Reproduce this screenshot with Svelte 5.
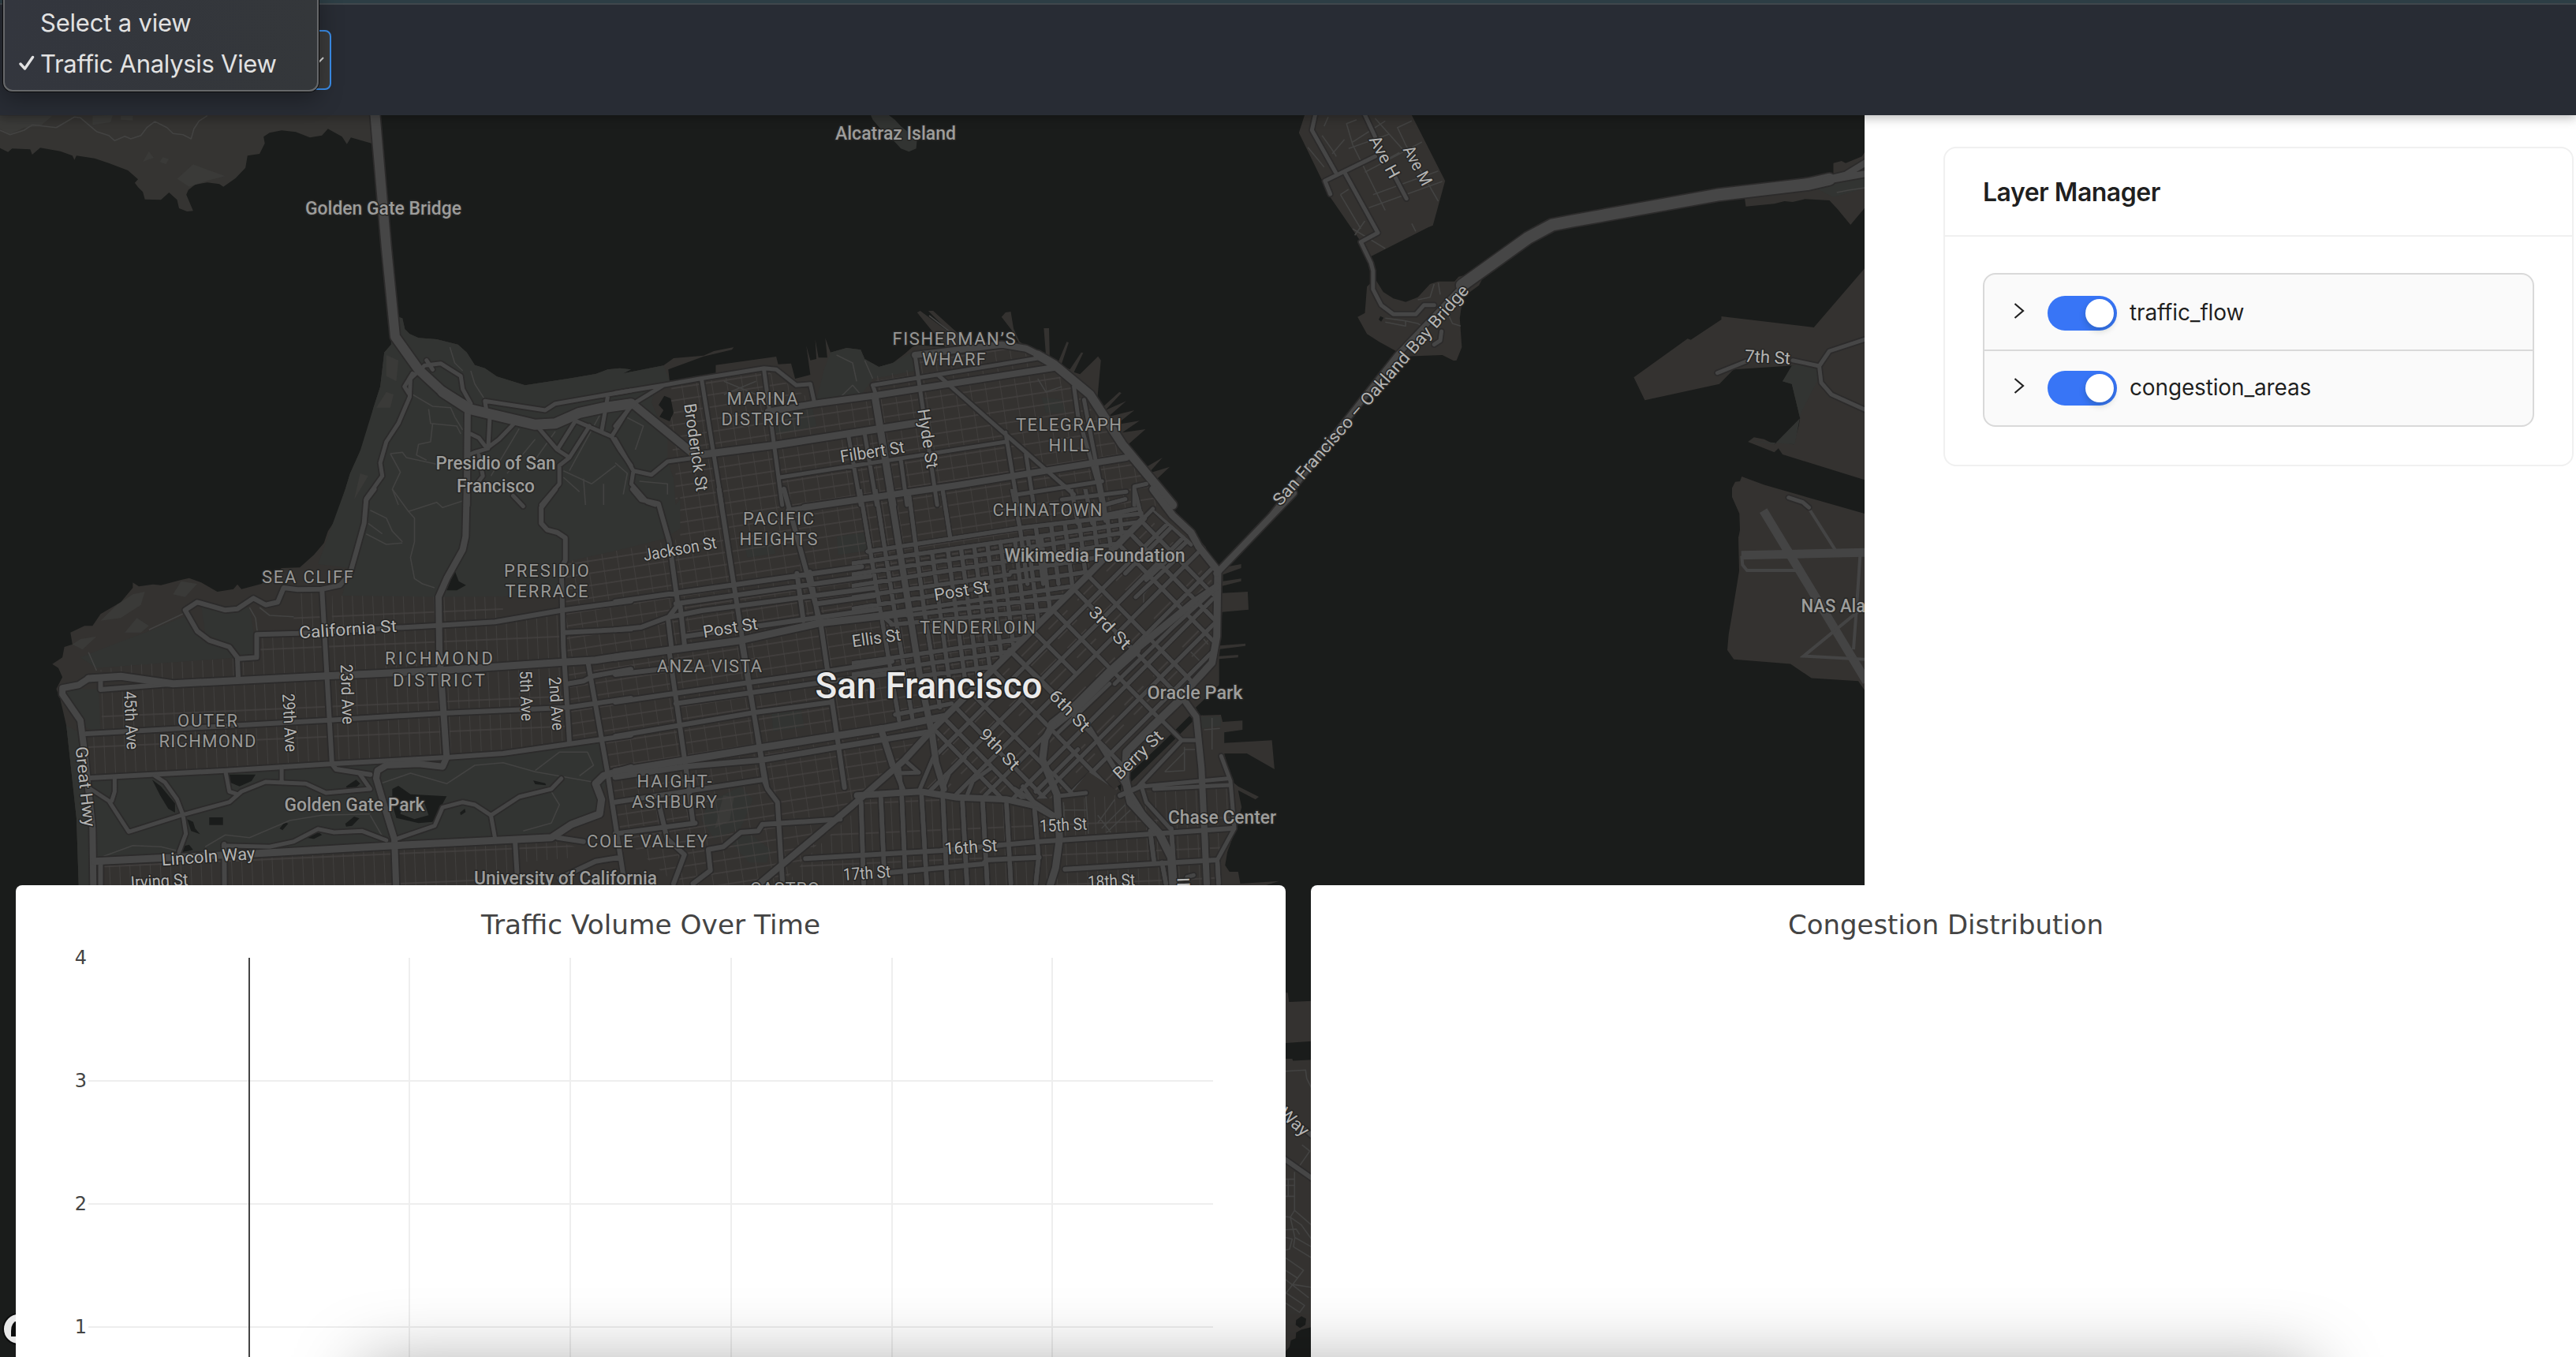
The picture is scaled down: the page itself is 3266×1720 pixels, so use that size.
<script>
  // Survey sheets: each one has an origin and a scale into map pixels.
  const sheets = {
    A: [0, 140, 0.5102, 1 / 3],
    B: [780, 140, 0.5102, 1 / 3],
    C: [1560, 140, 0.51658, 1 / 3],
    D: [0, 620, 0.5102, 1 / 3],
    E: [780, 620, 0.54847, 1 / 3],
    F: [1600, 1100, 1 / 3, 0.3954],
    G: [2100, 540, 1 / 3, 0.38265],
    H: [1080, 620, 1 / 3, 1 / 3]
  };

  function project(sheet, text) {
    const [ox, oy, sx, sy] = sheets[sheet];
    return text.trim().split(/\s+/).map((p) => {
      const [x, y] = p.split(',').map(Number);
      return `${(ox + x * sx).toFixed(1)} ${(oy + y * sy).toFixed(1)}`;
    });
  }
  const line = (sheet, text) => text.split(';').map((part) => 'M' + project(sheet, part).join('L')).join('');
  const area = (...parts) => 'M' + parts.flatMap(([s, t]) => project(s, t)).join('L') + 'Z';

  const presidioCoast = '989,785 1000,790 1006,832 1018,850 1040,865 1085,870 1138,890 1160,920 1180,968 1205,980 1235,1012 1305,1045 1420,1018 1480,1002 1510,985 1540,980 1568,985';

  const headlands = area(['A', '0,0 945,18 952,130 930,128 872,103 862,128 850,100 815,70 800,95 770,103 735,82 700,76 670,85 655,100 658,125 645,165 615,172 610,218 585,258 555,290 545,280 515,274 485,282 468,302 463,320 480,382 465,384 445,372 440,340 420,312 400,340 360,338 355,310 343,292 335,275 343,262 318,228 270,200 235,182 190,172 185,188 180,172 150,155 100,142 80,168 75,148 30,145 20,158 0,143']);

  const land = [
    area(
      ['A', presidioCoast],
      ['B', '20,1000 120,970 145,942 220,932 245,915 295,900 303,883 290,910 220,935 132,985 135,1028 250,1000 250,968 400,936 405,965 437,962 447,1020 485,1005 475,895 485,950 500,945 497,870 505,940 527,940 522,865 535,920 575,903 610,910 620,945 655,975 690,960 720,925 738,900 750,892 820,900 750,768 758,762 835,850 778,762 790,762 850,845 900,890 930,895 1005,890 985,835 960,785 970,768 983,765 990,830 1005,880 1040,912 1070,925 1065,828 1078,828 1080,945 1100,960 1122,880 1127,882 1108,970 1130,985 1158,920 1163,922 1140,995 1155,1003 1200,935 1207,950 1197,1115 1210,1130 1253,1070 1258,1075 1218,1140 1270,1105 1225,1165 1290,1140 1245,1195 1303,1180 1260,1225 1318,1212 1275,1270 1315,1360 1360,1320 1325,1380 1378,1355 1340,1410 1385,1500'],
      ['E', '1245,0 1330,155 1365,220 1372,250 1398,300 1447,285 1447,300 1405,325 1405,350 1447,340 1447,350 1403,368 1403,395 1462,390 1464,458 1403,467 1398,595 1457,587 1457,596 1398,608 1396,635 1440,630 1440,640 1396,646 1396,745 1342,830 1352,860 1400,858 1404,885 1450,880 1450,915 1408,925 1408,965 1518,955 1524,1065 1460,1005 1408,1005 1425,1110 1440,1130 1488,1170 1480,1180 1440,1145 1448,1210 1435,1290 1415,1380 1410,1430 1420,1455 1440,1455 1445,1500 1535,1490 1440,1540'],
      ['D', '196,1530 190,1250 165,900 150,800 140,760 155,715 145,680 130,665 155,640 160,600 180,590 175,545 210,520 230,520 250,475 300,430 330,375 330,355 345,370 380,362 400,365 450,345 470,338 500,355 540,390 580,380 590,362 600,380 650,360 700,300 745,298 780,250 805,205 815,160 832,120 858,0'],
      ['A', '850,1480 870,1380 895,1295 910,1240 928,1130 945,1050 955,920 972,890 972,860']
    ),
    area(['C', '182,0 182,18 168,85 245,330 345,555 485,445 497,437 527,268 445,18 440,0']),
    area(['C', '355,640 375,690 400,715 430,728 460,710 490,660 510,650 550,650 560,632 580,625 620,635 610,665 570,710 563,790 568,900 555,950 548,952 520,930 430,935 365,880 335,850 312,785 330,770 335,670']),
    area(['C', '1262,332 1265,365 1335,355 1360,345 1380,348 1410,337 1470,342 1490,375 1522,435 1568,350 1568,130 1550,175 1510,200 1500,192 1480,200 1480,240 1420,280']),
    area(['C', '1568,580 1432,825 1205,783 1205,795 1130,872 1122,868 990,1015 1017,1102 1200,1040 1235,985 1385,970 1355,1030 1378,1040 1398,1170 1395,1200 1382,1270 1345,1258 1335,1270 1310,1250 1285,1243 1270,1260 1335,1300 1345,1285 1355,1308 1380,1320 1568,1410']),
    area(['G', '325,167 410,195 800,292 800,885 768,845 590,835 510,788 295,773 270,742 275,690 285,640 315,480 312,370 318,345 316,290 288,235 288,205 300,185 318,183']),
    area(['F', '80,400 98,400 103,430 190,427 190,556 80,562']),
    area(['F', '80,612 115,612 118,618 190,615 190,1472 150,1480 130,1490 128,1508 110,1515 105,1535 80,1560'])
  ];

  const parks = [
    area(
      ['A', presidioCoast],
      ['B', '20,1000 120,970 135,1028 100,1060 90,1110 110,1180 130,1230 130,1330 145,1400 150,1500'],
      ['E', '150,40 150,150 110,190 0,235'],
      ['D', '1410,275 1395,395 1250,408 1080,410 850,405 870,300 790,285 858,0'],
      ['A', '850,1480 870,1380 895,1295 928,1130 945,1050 955,920 972,890 972,860']
    ),
    area(['D', '165,900 205,930 220,1100 820,1045 1100,1020 1250,1005 1410,970 1490,955 1510,1080 1490,1220 1380,1310 980,1350 235,1410 235,1530 196,1530 190,1250']),
    area(['D', '370,540 465,480 500,560 580,610 590,640 240,680 200,640 300,580']),
    area(['D', '500,440 620,450 632,560 632,630 600,630 570,590 510,550']),
    area(['D', '155,760 245,760 250,930 205,900']),
    area(['B', '635,18 680,18 695,35 710,60 750,110 748,145 730,157 710,145 680,95 665,80 640,35']),
    area(['B', '535,920 575,903 610,910 620,945 655,975 690,960 735,920 745,990 640,1020 610,1085 500,1100 520,980']),
    area(['B', '390,1150 490,1130 500,1200 395,1235']),
    area(['B', '1060,1090 1110,1100 1120,1150 1070,1150']),
    area(['E', '512,180 575,165 582,235 515,250']),
    area(['E', '300,215 365,200 370,245 305,260']),
    area(['E', '362,855 430,840 437,905 365,920']),
    area(['E', '215,1190 290,1130 318,1180 290,1290 230,1330 200,1260']),
    area(['E', '260,1330 310,1310 360,1370 350,1420 310,1420']),
    area(['E', '1350,865 1400,865 1400,900 1355,910']),
    area(['C', '1378,970 1445,960 1440,1030 1400,1150 1385,1270 1270,1255 1335,1270 1398,1170 1378,1040 1355,1030']),
    area(['C', '1430,290 1568,255 1568,290 1480,330'])
  ];

  const hills = [
    area(['A', '0,20 130,20 100,60 60,65 25,90 0,70']),
    area(['A', '230,20 280,18 275,45 230,55']),
    area(['A', '480,205 560,250 520,265 470,290 440,260']),
    area(['A', '370,155 382,180 355,195']),
    area(['A', '405,178 420,185 412,205 397,195']),
    area(['A', '300,20 330,20 330,38 300,35']),
    area(['D', '330,400 360,390 350,440 300,490 250,500 290,440']),
    area(['D', '450,350 490,360 460,410 430,400']),
    area(['D', '340,490 370,520 350,545 310,545']),
    area(['D', '180,590 200,570 240,560 205,610']),
    area(['A', '960,930 990,950 985,1030 960,1010']),
    area(['A', '960,1070 978,1080 970,1130 935,1130']),
    area(['A', '895,1380 915,1390 880,1480']),
    area(['E', '250,1165 275,1170 265,1260 230,1290'])
  ];

  const water = [
    area(['D', '570,1085 635,1085 625,1110 595,1130 572,1115']),
    area(['D', '378,1105 400,1130 435,1195 435,1230 418,1215 398,1165']),
    area(['D', '465,1255 480,1265 485,1290 497,1312 475,1300']),
    area(['D', '520,1248 554,1248 554,1277 520,1277']),
    area(['D', '860,1130 885,1105 895,1120 880,1140 862,1138']),
    area(['D', '858,1272 880,1245 893,1252 875,1280 860,1283']),
    area(['D', '695,1290 708,1265 716,1272 702,1297']),
    area(['D', '975,1140 990,1128 1020,1160 1110,1168 1095,1210 1075,1265 1040,1270 985,1250 975,1200']),
    area(['D', '1110,385 1130,310 1140,350 1158,365 1135,385']),
    area(['D', '760,1325 790,1303 800,1315 780,1330']),
    area(['D', '450,1360 470,1352 480,1372 455,1380']),
    area(['D', '1143,1230 1155,1215 1157,1228 1145,1240']),
    area(['D', '1325,1108 1355,1118 1357,1126 1330,1122']),
    area(['B', '122,1085 138,1095 145,1150 135,1182 110,1165 120,1140 108,1120']),
    area(['H', '1285,862 1300,880 1240,940 1060,1115 1058,1080 1170,975']),
    area(['H', '1010,1130 1025,1120 1022,1150']),
    area(['C', '368,782 376,788 370,803 364,795']),
    area(['F', '130,1450 150,1437 168,1445 165,1465 145,1475 128,1465'])
  ];

  const island = area(['D', '1000,1190 1055,1195 1065,1240 1030,1255 995,1235']);

  // Residential blocks filled with a fine street mesh
  const richmond = [
    area(['D', '825,405 1250,410 1250,500 1090,515 825,540']),
    area(['D', '240,690 320,668 632,640 640,553 800,545 820,540 1090,520 1400,470 1400,650 1090,685 430,730 300,710']),
    area(['D', '250,765 810,715 1400,665 1410,960 1110,1015 225,1092 215,935 255,930']),
    area(['D', '730,390 800,390 800,540 730,545']),
    area(['D', '240,1425 980,1362 1370,1335 1430,1360 1430,1400 1285,1420 1285,1530 240,1530'])
  ];
  const heights = area(
    ['B', '140,1050 370,985 440,1050 495,1110 640,1085 650,1010 750,980 760,930 960,895 1020,910 1085,980 1140,1060 1260,1280 1380,1500'],
    ['E', '1215,70 1100,300 760,860 560,1180 390,1490 385,1530 160,1530 0,1300'],
    ['D', '1555,1420 1510,1080 1500,950 1410,965 1400,280'],
    ['E', '0,235 150,190 150,0'],
    ['B', '150,1500 150,1380 135,1200']
  );
  const soma = area(['H', '1145,75 1290,200 1385,320 1385,500 1370,650 1250,800 1040,1010 1030,1160 900,1075 830,1160 780,1175 590,1180 280,1150 330,1010 310,910']);
  const downtown = area(['H', '0,0 1090,0 1110,100 1000,215 900,325 310,910 120,900 0,900']);
  const mission = area(['E', '590,1170 780,1180 900,1200 1020,1240 1050,1180 1180,1160 1430,1110 1430,1300 1390,1420 1390,1530 385,1530 440,1405']);

  const avenues = [335, 395, 445, 495, 545, 595, 650, 700, 750];
  const gridDown =
    line('H', '60,237 640,148 1105,92;0,283 1090,125;0,325 1055,162;0,368 1005,208;0,412 600,325;605,315 740,292 960,255;0,455 600,358 895,315;0,492 845,368;210,480 805,408;150,515 755,458;0,662 130,645 650,568;0,705 600,618;255,712 530,675;165,857 380,815;30,0 110,470 180,880;90,0 165,480 232,880;215,0 275,460 335,830;345,0 375,190;610,0 640,150;960,60 1040,38;960,100 1080,75;960,60 965,110;1075,0 1100,100;120,485 150,510') +
    avenues.map((x) => line('H', `${x - 30},${245 - (x - 300) * 0.15} ${x + 35},720`)).join('') +
    [640, 700, 758, 810, 865, 920, 972, 1020].map((x) => line('H', `${x},${150 - (x - 640) * 0.12} ${x + 28},360`)).join('') +
    line('H', '835,0 860,130;888,0 915,130;945,0 965,120');
  const crossings = [[1100, 120], [1055, 165], [1010, 205], [895, 325], [845, 380], [765, 460], [600, 612], [535, 685], [390, 825], [350, 870], [310, 910]];
  const parallels = [1332, 1445, 1558, 1672, 1790, 1890, 1990];
  const gridSoma =
    crossings.map(([x, y]) => line('H', `${x},${y} ${x + 470},${y + 480}`)).join('') +
    line('H', '690,540 850,700;450,770 760,1080;1145,75 1290,210') +
    parallels.map((s) => line('H', `${s - 90},90 ${s - 1180},1180`)).join('') +
    line('H', '1240,120 1040,320;1300,175 1120,345;860,990 700,1150;1250,250 1080,410');
  const gridMission =
    line('H', '35,1190 45,1500;110,1165 125,1500;190,1170 205,1500;265,1160 285,1500;345,1150 362,1500;420,1175 438,1500;497,1180 515,1500;588,1190 605,1500;695,1215 710,1400 700,1500;1135,1300 1150,1420;1215,1290 1230,1500;1345,1290 1350,1500;1180,1420 1195,1500;1390,1410 1395,1500');

  const roads = [
    // streets
    [5, 'A', '1055,970 1020,1020 1018,1090 990,1190 960,1260 945,1340 950,1390 910,1475 908,1500;1055,970 1095,962 1145,1010 1150,1060 1170,1115;1060,950 1075,985;1025,1000 1005,1050 1015,1075;1205,1105 1355,1140 1380,1115 1568,1065;1205,1105 1210,1150;1170,1230 1190,1245 1210,1285 1240,1250 1275,1195;1217,1170 1213,1285 1180,1300 1165,1310;1340,1210 1385,1290 1415,1320 1465,1200;1385,1290 1430,1180 1520,1240 1540,1290 1568,1350;1495,1220 1510,1090;1520,1240 1560,1140;1415,1320 1390,1350 1390,1420 1345,1500;1190,1310 1200,1390 1185,1420;1275,1465 1300,1505'],
    [6, 'D', '930,0 910,40 905,130 885,240 870,320 845,365 800,380 740,382 705,375 690,430 660,440 630,415 590,455 560,460 490,430 460,460 490,540 520,575 570,600 590,640 592,715'],
    [6, 'D', '1380,0 1345,70 1345,130 1360,155 1385,165 1405,185 1405,270 1395,300 1400,600 1415,960'],
    [6, 'D', '590,645 638,640 638,553 740,548 1090,518 1230,505 1400,460 1568,425;215,930 820,878 1100,852 1410,830 1568,795;225,1098 560,1070 820,1045 1110,1020 1250,1005 1568,935;800,380 825,1045 835,1065 920,1085;1462,665 1510,1080 1555,1530;1410,740 1450,730 1475,710 1568,685;1405,545 1568,532;557,1350 558,1530;1280,1340 1285,1465;1385,1325 1450,1340;250,730 250,762 430,740;250,1420 250,1530;1390,1480 1480,1415 1540,1400'],
    [5, 'D', '385,1090 410,1115 440,1180 455,1240 462,1310 445,1380;225,1140 270,1185 320,1303 450,1240 570,1190 600,1150 660,1113 760,1120 810,1155 920,1140 895,1085;285,1095 285,1150 278,1185;560,1070 570,1150 590,1160;700,1060 700,1110;555,1355 670,1360 730,1340 790,1292 830,1305 900,1300 960,1335;985,1330 1080,1280 1100,1210 1150,1190 1180,1200 1220,1240 1230,1325;1220,1240 1290,1170 1370,1140 1395,1100'],
    [5, 'B', '0,1075 120,1045 210,1020 370,980 400,985 450,1045 485,1040 495,1110;120,1045 45,1115 0,1200;215,1025 265,1500;370,990 415,1500;745,930 800,1500;805,1010 965,1225 1140,1460;640,1045 760,1015 1050,942;640,1045 650,1090;410,1395 970,1260;0,1250 45,1370 90,1385 130,1335 200,1320;45,1370 40,1420 80,1490 100,1500;1140,1050 1150,1160 1200,1420 1210,1500;1165,1100 1215,1500;970,1225 1000,1500;1020,1300 1040,1500;580,1240 610,1500;620,1230 650,1500;710,1330 725,1500;1000,1460 1210,1410;1290,1500 1290,1430 1320,1420;1110,1480 1270,1450'],
    [6, 'E', '0,428 140,395 570,295;140,436 590,330;0,535 60,525 120,488 200,462 600,375;160,560 610,455;470,435 600,405;400,80 620,25;0,705 130,680;0,810 310,735 500,690 640,655;140,815 500,730 640,700;0,940 320,850 500,810;0,1190 340,1105;0,1310 185,1270;340,1275 520,1255;40,0 60,40 100,55 125,200 145,440 122,490 130,600;240,0 345,1110 352,1140 375,1190 388,1530;150,440 160,590;125,620 165,1080 180,1270;390,0 475,510 530,1135;290,570 350,1130;615,910 640,1040 665,1140;420,320 435,500;450,315 470,500;100,1190 120,1330 160,1390 135,1500;340,1275 330,1300 290,1305 250,1360 215,1370 220,1450 180,1500'],
    [6, 'E', '440,1405 750,1375 980,1340 1425,1290;620,1460 850,1425 860,1410 980,1400;1040,1445 1390,1410'],
    [5, 'H', '1110,1130 1430,1100;1150,1140 1440,1125;1405,1015 1440,1110 1455,1290 1390,1410;1100,1125 1120,1190 1215,1295;1090,1130 1255,955 1315,955;1170,870 1255,955;780,1168 890,1155;1275,1475 1300,1468;175,1080 255,1078 200,1030;310,1020 255,1150;180,1060 190,1160;440,1160 460,1110 530,1060;350,1130 370,1080 430,1020;770,1085 840,1160'],
    [5, 'C', '208,0 208,18 200,75 258,235;245,318 232,268 355,175;280,235 362,465 320,500 345,580 350,610 350,680 370,740 400,775 455,775 475,740 500,740;325,0 355,100;405,255 432,335;518,840 515,875 500,890;1195,998 1265,955;1380,950 1445,972 1470,915 1568,865;1445,972 1450,1035 1475,1080 1568,1145;1370,1472 1405,1490 1420,1510'],
    // arterials
    [8, 'A', '1162,1130 1160,1500'],
    [8, 'D', '1160,0 1157,180 1150,230 1110,340 1090,410 1092,620 1110,1020 1100,1055 1040,1045 960,1050 938,1070 935,1100 960,1230 980,1330 985,1530'],
    [9, 'D', '220,720 300,712 430,740 810,710 1090,690 1400,658 1480,650 1568,630'],
    [8, 'D', '220,720 195,745 155,757 155,780 200,880 210,1000 230,1290 232,1530'],
    [9, 'D', '235,1415 640,1385 980,1355 1370,1325 1420,1275 1490,1235 1495,1180 1480,1120 1500,1090 1568,1060'],
    [9, 'E', '0,640 290,575 470,510 680,470;0,1075 330,985 620,910 760,865'],
    [7, 'E', '0,1095 160,1055 340,1030 500,985 720,925'],
    [9, 'B', '200,1312 400,1272 750,1188'],
    [8, 'B', '380,1145 495,1115 640,1085 850,1035 1090,978;470,1510 850,1425 1270,1320'],
    [9, 'B', '645,1085 690,1500'],
    [8, 'H', '145,0 180,220 225,500 260,720 305,930 320,1040 350,1140;110,910 155,1050'],
    [10, 'B', '0,1120 45,1118 200,1312'],
    [8, 'B', '745,930 960,890 1020,905 1060,935'],
    [11, 'B', '1050,930 1090,965 1180,1080 1260,1270 1385,1500'],
    [9, 'H', '1145,0 1220,100 1290,165 1320,220 1392,310 1388,560 1370,660 1250,790'],
    [10, 'H', '1250,800 1140,905 1045,1000 1040,1100 1060,1190 1170,1310 1215,1400 1222,1500'],
    [8, 'H', '1270,810 1310,865 1330,1060 1350,1500'],
    [6, 'H', '600,612 905,910 1150,1300;1020,1165 1110,1125'],
    [8, 'H', '-470,1600 0,1205 200,1030 310,910 900,325 1110,110'],
    [5, 'H', '1110,110 1145,75'],
    [8, 'H', '20,1165 260,1150 400,1172 590,1180 700,1205 770,1245'],
    [9, 'H', '1390,370 1300,430 1220,495 1080,610'],
    [13, 'H', '1080,610 980,700 860,820 765,895'],
    [9, 'H', '765,895 735,950 725,1030 780,1160 790,1330 775,1440 750,1520'],
    [5, 'H', '1370,390 1215,530 1000,740;780,930 980,740;620,1140 770,1240;650,1130 700,1200'],
    [8, 'E', '1390,320 1568,15'],
    [7, 'C', '101,1540 410,930 575,660'],
    // highways
    [12, 'A', '930,0 932,18 960,520 982,860 1040,985 1100,1070 1165,1130'],
    [13, 'A', '1100,1070 1165,1135 1220,1155 1330,1195 1380,1190 1440,1150 1500,1130 1568,1115'],
    [15, 'C', '568,665 730,485 790,435 840,420 1200,320 1420,280 1470,262'],
    [8, 'C', '1460,264 1510,245 1568,190;1460,268 1568,238'],
    [6, 'F', '80,930 190,995;165,840 190,858']
  ].map(([w, s, t]) => ({ w, d: line(s, t) }));

  const lanes = [
    line('A', '0,75 25,92 60,75 80,55 140,65 185,25 200,28 240,80 270,95 285,115 310,98 325,108 350,95 365,65 385,42 415,65 430,88 455,92 475,108 482,70 495,40 515,20'),
    line('A', '1118,900 1130,960 1150,990;1170,990 1180,1040 1203,1095;1025,1080 1075,1125 1120,1130 1130,1165 1150,1215;1065,1135 1070,1190 1135,1200 1145,1230;1075,1190 1070,1260 1040,1270 1035,1310 1060,1330;970,1305 1000,1300 1010,1320 1100,1350;970,1305 995,1375 975,1440 990,1500;1290,1210 1220,1390;1330,1250 1260,1380;1380,1220 1310,1370;1400,1370 1470,1420 1530,1350;1490,1160 1415,1370;1500,1420 1500,1500;1450,1400 1455,1500;1400,1395 1440,1450'),
    line('D', '975,0 1015,85 1030,110 1030,200 1020,260 1030,340 1050,360 1080,375;1015,85 1085,50 1100,70 1160,40;920,80 960,110 975,160 1000,200;910,170 960,210 1000,205;915,130 950,170;945,1120 1020,1080 1110,1120 1180,1050 1250,1040 1330,1075 1480,1115;220,620 240,690;370,535 460,470;1330,1070 1390,1000 1460,1000 1475,1050 1440,1090;250,1400 330,1355 400,1360 440,1375;510,1360 560,1315 620,1325 720,1260 800,1240 920,1235;620,450 635,490 640,550;645,450 670,480 730,485;1370,1150 1390,1200 1370,1270 1300,1300;920,1240 950,1320'),
    line('B', '20,1160 70,1200 50,1290;550,930 590,960 600,1030;620,950 640,1020;560,1090 590,1045 610,1080;270,1030 350,1080;270,1080 350,1030;0,1340 30,1380 20,1460;60,1410 130,1420 130,1460;780,780 830,840;1050,1020 1070,1070 1110,1050'),
    line('C', '240,25 230,60;310,35 285,50 300,130 380,380;380,40 300,120;290,145 390,90;445,40 410,65 430,130 510,345;415,160 380,190;470,120 330,235;510,230 350,320;520,270 340,370;270,320 320,450;290,300 270,320;330,420 305,475;445,430 455,460;300,450 380,525;355,30 430,160;225,95 250,150 260,175;250,165 280,110;190,140 230,215;500,660 490,710 460,720;510,655 515,700;430,800 460,810 480,830;380,790 430,800 430,820 380,805;530,760 545,810 565,820'),
    line('C', '1488,312 1520,302 1568,292'),
    line('F', '90,652 166,648 170,675 188,705;90,998 124,998;90,1018 124,1018;124,975 124,1098 188,1145;90,1053 124,1053;100,998 100,1053;124,1098 108,1120 90,1118;108,1120 150,1145 188,1190;108,1120 125,1185 188,1215;90,1160 130,1158 143,1175;90,1185 115,1190 105,1222 90,1225;125,1185 120,1215 188,1250;90,1250 158,1290 90,1365;90,1320 178,1378;90,1290 135,1315;90,1362 162,1403 143,1425 90,1395;115,1335 188,1345;152,888 182,908 143,955'),
    line('H', '1340,915 1400,910;1370,870 1370,990;1265,980 1265,1070 1190,1075;1265,990 1305,990;1190,1075 1265,1000;805,1190 808,1300;890,1165 900,1310;805,1220 895,1220;935,1270 1000,1180;935,1240 985,1305;950,1290 1040,1200;970,1305 1060,1220;930,940 1000,1010 1030,1080;1110,440 1110,400 1150,350;1250,420 1265,470 1200,540;1270,470 1320,530;1330,560 1355,590;1280,610 1340,670;1150,640 1190,600;1300,490 1320,470')
  ];

  const runways = [
    [11, line('G', '407,280 800,847;323,428 800,419')],
    [4, line('G', '505,238 545,247 565,255 578,270 680,410;325,430 328,460 345,478 535,478;775,430 765,560 750,740;792,597 560,762 800,773')]
  ];

  // text, centre x, centre y, width, rotation
  const streetLabels = [
    ['California St', 441, 798, 124, -4], ['Lincoln Way', 264, 1086, 119, -4], ['Irving St', 202, 1117, 73, -3],
    ['Jackson St', 862, 696, 94, -10], ['Post St', 926, 796, 70, -9], ['Post St', 1219, 749, 70, -9],
    ['Ellis St', 1111, 809, 62, -8], ['Filbert St', 1106, 573, 82, -9], ['15th St', 1348, 1046, 60, -3],
    ['16th St', 1231, 1074, 67, -4], ['17th St', 1099, 1107, 60, -4], ['18th St', 1409, 1117, 60, -3],
    ['7th St', 2241, 453, 58, 3], ['Broderick St', 882, 567, 112, 82], ['Hyde St', 1176, 556, 76, 81],
    ['3rd St', 1407, 796, 66, 46], ['6th St', 1356, 901, 64, 46], ['9th St', 1267, 950, 64, 46],
    ['Berry St', 1443, 957, 78, -44], ['45th Ave', 166, 913, 74, 87], ['29th Ave', 367, 916, 74, 87],
    ['23rd Ave', 440, 880, 76, 88], ['5th Ave', 667, 882, 64, 88], ['2nd Ave', 705, 892, 68, 86],
    ['Great Hwy', 108, 997, 102, 84], ['San Francisco – Oakland Bay Bridge', 1738, 501, 364, -48.7],
    ['Ave H', 1755, 199, 58, 62], ['Ave M', 1797, 210, 54, 62], ['Way', 1641, 1422, 42, 42], ['Illinois St', 1501, 1158, 92, 88]
  ];
  // text, centre x, baseline, width
  const placeLabels = [
    ['Golden Gate Bridge', 486, 272, 198], ['Alcatraz Island', 1135.5, 177, 153], ['Presidio of San', 628.5, 595, 152],
    ['Francisco', 628.5, 624, 99], ['Wikimedia Foundation', 1388, 712, 229], ['Oracle Park', 1515, 886, 121],
    ['Chase Center', 1549.5, 1044, 137], ['Golden Gate Park', 449.5, 1028, 178], ['University of California', 717, 1121, 232],
    ['NAS Alameda', 2352, 776, 137]
  ];
  const districtLabels = [
    ['FISHERMAN’S', 1209.5, 437, 156], ['WHARF', 1209.5, 463, 81], ['MARINA', 966.5, 513, 90], ['DISTRICT', 966.5, 539, 104],
    ['TELEGRAPH', 1355, 546, 134], ['HILL', 1355, 572, 51], ['PACIFIC', 987, 665, 90], ['HEIGHTS', 987, 691, 99],
    ['CHINATOWN', 1328, 654, 139], ['TENDERLOIN', 1239.5, 803, 147], ['ANZA VISTA', 899.5, 852, 133], ['HAIGHT-', 855, 998, 95],
    ['ASHBURY', 855, 1024, 108], ['COLE VALLEY', 820.5, 1074, 153], ['SEA CLIFF', 390, 739, 116], ['PRESIDIO', 693, 731, 108],
    ['TERRACE', 693, 757, 105], ['RICHMOND', 556.5, 842, 137], ['DISTRICT', 556.5, 870, 117], ['OUTER', 263, 921, 76],
    ['RICHMOND', 263, 947, 123], ['CASTRO', 995, 1134, 88]
  ];

  const layers = ['traffic_flow', 'congestion_areas'];
  const yTicks = [[4, 1214], [3, 1370], [2, 1526], [1, 1682]];
  const xGrid = [519, 723, 927, 1131, 1334];
</script>

<div class="app">
  <header class="topbar">
    <div class="select"><svg viewBox="0 0 16 12" width="16" height="12"><path d="M2 3 L8 9 L14 3" /></svg></div>
    <div class="menu">
      <div class="option"><span class="tick"></span><span class="text first">Select a view</span></div>
      <div class="option">
        <span class="tick"><svg viewBox="0 0 20 20" width="20" height="20"><path d="M2 11 L7.5 17 L17.5 2.5" /></svg></span>
        <span class="text second">Traffic Analysis View</span>
      </div>
    </div>
  </header>

  <main>
    <svg class="map" viewBox="0 146 2364 1574" width="2364" height="1574">
      <defs>
        <pattern id="mesh-richmond" width="12.9" height="38" patternUnits="userSpaceOnUse" patternTransform="rotate(-2.5)">
          <path d="M0 0V38M0 1H12.9" class="mesh" />
        </pattern>
        <pattern id="mesh-heights" width="19" height="15.4" patternUnits="userSpaceOnUse" patternTransform="rotate(-8.8)">
          <path d="M0 0V15.4M0 1H19" class="mesh" />
        </pattern>
        <pattern id="mesh-soma" width="17" height="52" patternUnits="userSpaceOnUse" patternTransform="rotate(45)">
          <path d="M8 6V40" class="mesh" />
        </pattern>
        <clipPath id="clip-downtown"><path d={downtown} /></clipPath>
        <clipPath id="clip-soma"><path d={soma} /></clipPath>
      </defs>
      <rect x="0" y="146" width="2364" height="1574" class="sea" />
      <path d={headlands} class="headland" />
      {#each land as d}<path {d} class="land" />{/each}
      {#each parks as d}<path {d} class="park" />{/each}
      {#each hills as d}<path {d} class="hill" />{/each}
      {#each richmond as d}<path {d} fill="url(#mesh-richmond)" />{/each}
      <path d={heights} fill="url(#mesh-heights)" />
      <path d={mission} fill="url(#mesh-richmond)" />
      <path d={soma} class="land" />
      <path d={soma} fill="url(#mesh-soma)" />
      {#each water as d}<path {d} class="sea" />{/each}
      <path d={island} class="park" />
      {#each lanes as d}<path {d} class="lane" />{/each}
      {#each runways as [w, d]}<path {d} class="runway" stroke-width={w} />{/each}
      <g clip-path="url(#clip-downtown)"><path d={gridDown} class="casing" stroke-width="8" /><path d={gridDown} class="road" stroke-width="5" /></g>
      <g clip-path="url(#clip-soma)"><path d={gridSoma} class="casing" stroke-width="8" /><path d={gridSoma} class="road" stroke-width="5" /></g>
      <path d={gridMission} class="casing" stroke-width="9" />
      <path d={gridMission} class="road" stroke-width="5.5" />
      {#each roads as r}<path d={r.d} class="casing" stroke-width={r.w + 3.5} />{/each}
      <g clip-path="url(#clip-downtown)"><path d={gridDown} class="road" stroke-width="5" /></g>
      <g clip-path="url(#clip-soma)"><path d={gridSoma} class="road" stroke-width="5" /></g>
      <path d={gridMission} class="road" stroke-width="5.5" />
      {#each roads as r}<path d={r.d} class="road" stroke-width={r.w} />{/each}

      {#each streetLabels as [t, x, y, w, a]}
        <text class="label street" textLength={w} lengthAdjust="spacingAndGlyphs" transform="translate({x} {y}) rotate({a})" y="7">{t}</text>
      {/each}
      {#each placeLabels as [t, x, y, w]}
        <text class="label place" {x} {y} textLength={w} lengthAdjust="spacingAndGlyphs">{t}</text>
      {/each}
      {#each districtLabels as [t, x, y, w]}
        <text class="label district" {x} {y} textLength={w} lengthAdjust="spacing">{t}</text>
      {/each}
      <text class="label city" x="1177.5" y="885" textLength="288" lengthAdjust="spacingAndGlyphs">San Francisco</text>
      <circle cx="23.5" cy="1684.5" r="19.5" class="logo" />
      <path d="M14 1694V1687Q14 1676 22 1674V1694Z" class="logo-mark" />
    </svg>

    <aside>
      <section class="manager">
        <h2>Layer Manager</h2>
        <div class="body">
          <ul>
            {#each layers as name}
              <li>
                <svg class="chevron" viewBox="0 0 14 20" width="14" height="20"><path d="M1.5 1 L12 10 L1.5 19" /></svg>
                <span class="switch"><i></i></span>
                <span class="name">{name}</span>
              </li>
            {/each}
          </ul>
        </div>
      </section>
    </aside>
  </main>

  <div class="charts">
    <svg class="chart" viewBox="20 1122 1610 598" width="1610" height="598">
      <text class="title" x="825" y="1184" textLength="430" lengthAdjust="spacingAndGlyphs">Traffic Volume Over Time</text>
      {#each xGrid as x}<path d="M{x} 1214V1720" class="grid" />{/each}
      {#each yTicks as [v, y], i}
        {#if i > 0}<path d="M112 {y}H1538" class="grid" />{/if}
        <text class="axis" x="110" y={y + 8}>{v}</text>
      {/each}
      <path d="M316 1214V1720" class="zero" />
    </svg>
    <svg class="chart" viewBox="1662 1122 1604 598" width="1604" height="598">
      <text class="title" x="2467" y="1184" textLength="400" lengthAdjust="spacingAndGlyphs">Congestion Distribution</text>
    </svg>
  </div>
  <div class="dock"></div>
</div>

<style>
  :global(body) { background: #fff; }
  .app { position: relative; width: 3266px; height: 1720px; overflow: hidden; background: #fff; font-family: Inter, "Liberation Sans", sans-serif; }
  .topbar { position: relative; z-index: 2; box-sizing: border-box; height: 146px; background: #282c34; border-top: 4px solid #2d3e45; box-shadow: inset 0 2px #40474c, 0 4px 12px rgba(0, 0, 0, 0.25); }
  .select { position: absolute; left: 8px; top: 34px; box-sizing: border-box; width: 412px; height: 76px; border: 2px solid #3b8eea; border-radius: 8px; background: #3b3b3b; display: flex; align-items: center; justify-content: flex-end; padding-right: 6px; }
  .select path { fill: none; stroke: #ddd; stroke-width: 2; }
  .menu { position: absolute; left: 4px; top: -20px; box-sizing: border-box; width: 400px; height: 132px; padding: 16px 0 0 18px; border: 2px solid #66686a; border-radius: 12px; background: linear-gradient(100deg, #33363e, #34373a); box-shadow: 0 0 0 1px #0c0c0d, 0 8px 30px rgba(0, 0, 0, 0.35); color: #e2e2e2; }
  .option { display: flex; align-items: center; height: 52px; font-size: 31px; white-space: nowrap; }
  .tick { width: 27px; height: 20px; }
  .tick svg { display: block; }
  .tick path { fill: none; stroke: #e2e2e2; stroke-width: 3.4; stroke-linecap: round; stroke-linejoin: round; }
  .first { letter-spacing: -0.2px; }
  .second { letter-spacing: -0.3px; }
  main { display: flex; height: 1574px; }
  .map { display: block; flex: none; }
  .sea { fill: #1a1c1b; }
  .land { fill: #343230; }
  .headland { fill: #353432; }
  .park { fill: #323432; }
  .hill { fill: #3a3a38; }
  .mesh { fill: none; stroke: #434140; stroke-width: 1.6; }
  .lane { fill: none; stroke: #434342; stroke-width: 1.6; stroke-linejoin: round; }
  .runway { fill: none; stroke: #444; }
  .casing { fill: none; stroke: #2c2b2b; stroke-linejoin: round; stroke-linecap: round; }
  .road { fill: none; stroke: #464646; stroke-linejoin: round; stroke-linecap: round; }
  .label { text-anchor: middle; paint-order: stroke; stroke: #262625; stroke-width: 3px; stroke-linejoin: round; font-family: Roboto, "Liberation Sans", sans-serif; }
  .street { font-size: 21.5px; fill: #b4b4b3; }
  .place { font-size: 23px; font-weight: 500; fill: #9d9d9b; }
  .district { font-size: 22px; fill: #989896; }
  .city { font-size: 46px; font-weight: 500; fill: #ebebeb; stroke-width: 4px; }
  .logo { fill: #e8e8e8; stroke: #0c0d0d; stroke-width: 2; }
  .logo-mark { fill: #0c0d0d; }
  aside { flex: 1; padding: 40px 2px 0 100px; }
  .manager { box-sizing: border-box; width: 799px; height: 405px; border: 2px solid #f0f0f0; border-radius: 16px; color: rgba(0, 0, 0, 0.88); }
  h2 { margin: 0; box-sizing: border-box; height: 112px; padding: 0 48px; border-bottom: 2px solid #f0f0f0; line-height: 112px; font-size: 32px; font-weight: 600; letter-spacing: -0.5px; }
  .body { padding: 46px 48px; }
  ul { list-style: none; margin: 0; padding: 0; border: 2px solid #d9d9d9; border-radius: 16px; background: #fafafa; overflow: hidden; }
  li { display: flex; align-items: center; box-sizing: border-box; height: 95px; padding: 2px 37px 0; }
  li + li { height: 96px; padding-top: 0; border-top: 2px solid #d9d9d9; }
  .chevron { margin: -6px 29px 0 0; }
  .chevron path { fill: none; stroke: #222; stroke-width: 2.2; }
  .switch { display: flex; justify-content: flex-end; box-sizing: border-box; width: 88px; height: 44px; padding: 4px; border-radius: 22px; background: #3875f6; }
  .switch i { width: 36px; height: 36px; border-radius: 50%; background: #fff; box-shadow: 0 4px 8px rgba(0, 35, 11, 0.2); }
  .name { margin-left: 16px; font-size: 28px; letter-spacing: -0.15px; margin-top: -2px; }
  .charts { position: absolute; z-index: 1; left: 20px; right: 0; bottom: 0; display: flex; gap: 32px; }
  .chart { display: block; flex: none; background: #fff; border-radius: 8px 8px 0 0; font-family: "DejaVu Sans", sans-serif; }
  .title { font-size: 34px; fill: #444; text-anchor: middle; }
  .axis { font-size: 24px; fill: #444; text-anchor: end; }
  .grid { stroke: #eee; stroke-width: 2; }
  .zero { stroke: #444; stroke-width: 2; }
  .dock { position: absolute; z-index: 3; left: 460px; right: 335px; top: 1722px; height: 200px; box-shadow: 0 10px 90px rgba(0, 0, 0, 0.36); }
</style>
